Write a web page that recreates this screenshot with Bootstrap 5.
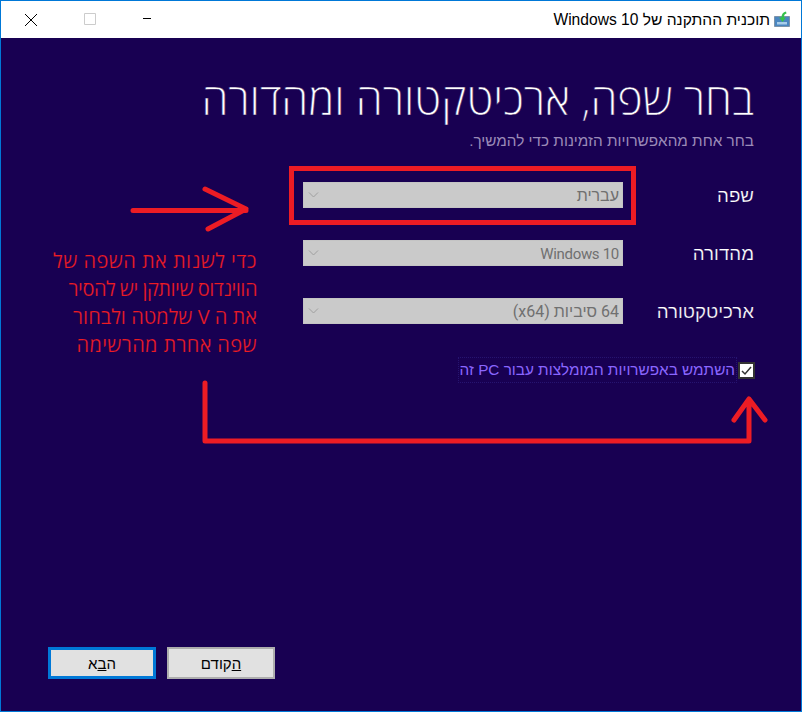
<!DOCTYPE html>
<html lang="he" dir="rtl">
<head>
<meta charset="utf-8">
<title>תוכנית ההתקנה של Windows 10</title>
<link href="https://cdn.jsdelivr.net/npm/bootstrap@5.3.0/dist/css/bootstrap.min.css" rel="stylesheet">
<style>
html,body{height:100%;margin:0}
body{font-family:"Open Sans","Liberation Sans",sans-serif;background:#180052}
.setup-win{width:802px;height:712px;border:1px solid #0078d7;position:relative;background:#180052;overflow:hidden}
.setup-title{height:37px;background:#fff;color:#000;padding:0 11px 0 1px;flex:none}
.ttext{font-family:"Liberation Sans",sans-serif;font-size:15.6px;margin-right:4px}
.ctrl{width:58px;text-align:center;line-height:0}
.ctrl-mid svg{margin-left:2px}
.setup-body{padding:0 47px;flex:1}
.setup-h{font-weight:300;font-size:43.4px;line-height:56px;color:#fff;margin:33px 0 0;font-family:"Open Sans","Liberation Sans",sans-serif;-webkit-text-stroke:.5px #180052}
.setup-sub{font-size:15.3px;line-height:20px;color:#9b8bb8;margin:4px 0 0;font-family:"Liberation Sans",sans-serif}
.frow{height:26px;margin-bottom:32px}
.flabel{width:131px;font-size:18.7px;color:#fff;font-family:"Liberation Sans",sans-serif;margin-top:2px;-webkit-text-stroke:.2px #180052}
.fsel.form-select{width:320px;height:26px;padding:1px 3px 0 0;border:1px solid #c4c4c4;border-radius:0;background-color:#cacaca;color:#707070;font-size:16px;line-height:24px;font-family:Roboto,"Liberation Sans",sans-serif;opacity:1;background-position:left 2px center;background-size:14px 8px;background-image:url("data:image/svg+xml,%3Csvg xmlns='http://www.w3.org/2000/svg' viewBox='0 0 14 8'%3E%3Cpath d='M3 1.5l4.500 4.500 4.500-4.500' fill='none' stroke='%23a0a0a0'/%3E%3C/svg%3E")}
.fsel.fsel-latin{font-size:15px;letter-spacing:-.3px}
.frows{margin-top:31px}
.chkrow{margin-top:36px;margin-right:-1px;height:20px;color:#8a66ff;font-size:15.3px;font-family:"Liberation Sans",sans-serif;gap:3px}
.chkbox{width:17px;height:17px;background:#fff;border:2px solid #333;flex:none;line-height:0}
.chktext{outline:1px dotted #261470;outline-offset:1px}
.btns{position:absolute;left:47px;bottom:32px;gap:11px}
.wbtn{width:108px;height:32px;background:#e1e1e1;color:#000;border:2px solid #adadad;border-radius:0;font-size:15px;line-height:1;padding:0;font-family:"Liberation Sans",sans-serif}
.wbtn.wdef{border:3px solid #0078d7}
.wbtn:hover{background:#e1e1e1;color:#000}
.anno{position:absolute;left:0;top:0;pointer-events:none}
.anno-text{position:absolute;right:544px;top:246px;width:240px;color:#ed1c24;font-size:20px;line-height:28px;font-family:"Open Sans","Liberation Sans",sans-serif;white-space:nowrap;-webkit-text-stroke:.2px #180052}
.al{display:block}
.al1{letter-spacing:.45px}
.al2{letter-spacing:-.5px}
.al4{letter-spacing:.35px}
</style>
</head>
<body>
<div class="setup-win d-flex flex-column">
  <div class="setup-title d-flex align-items-center justify-content-between">
    <div class="d-flex align-items-center">
      <svg width="16" height="16" viewBox="0 0 16 16"><path d="M.5 5.500h15v10H.5z" fill="#4a86c0" stroke="#7d93a8"/><path d="M3 11h10v2.500H3z" fill="#a8cdea"/><path d="M12 .5C9 1 7.500 3 7.500 6.500H5L8.500 11 12 6.500H10C10 4 10.500 3 12.500 2.500z" fill="#35c24a"/></svg>
      <span class="ttext">תוכנית ההתקנה של Windows 10</span>
    </div>
    <div class="d-flex flex-row-reverse">
      <div class="ctrl"><svg width="14" height="14" viewBox="0 0 14 14"><path d="M1 1l12 12M13 1L1 13" stroke="#000" stroke-width="1" fill="none"/></svg></div>
      <div class="ctrl ctrl-mid"><svg width="12" height="12" viewBox="0 0 12 12"><path d="M.5.5h11v11H.5z" fill="none" stroke="#ccc"/></svg></div>
      <div class="ctrl"><svg width="10" height="10" viewBox="0 0 10 10"><path d="M1 5.500h8" stroke="#000" stroke-width="1"/></svg></div>
    </div>
  </div>
  <div class="setup-body">
    <h1 class="setup-h">בחר שפה, ארכיטקטורה ומהדורה</h1>
    <p class="setup-sub">בחר אחת מהאפשרויות הזמינות כדי להמשיך.</p>
    <div class="frows">
      <div class="frow d-flex align-items-center"><label class="flabel">שפה</label><select class="form-select fsel" disabled><option>עברית</option></select></div>
      <div class="frow d-flex align-items-center"><label class="flabel">מהדורה</label><select class="form-select fsel fsel-latin" disabled><option>Windows 10</option></select></div>
      <div class="frow d-flex align-items-center"><label class="flabel">ארכיטקטורה</label><select class="form-select fsel" disabled><option>64 סיביות (x64)</option></select></div>
    </div>
    <div class="chkrow d-flex align-items-center">
      <span class="chkbox d-inline-block"><svg width="13" height="13" viewBox="0 0 13 13"><path d="M2 7l3 3 6-7" fill="none" stroke="#333" stroke-width="1.5"/></svg></span>
      <span class="chktext">השתמש באפשרויות המומלצות עבור PC זה</span>
    </div>
  </div>
  <div class="btns d-flex">
    <button class="btn wbtn" type="button"><u>ה</u>קודם</button>
    <button class="btn wbtn wdef" type="button">ה<u>ב</u>א</button>
  </div>
  <svg class="anno" width="802" height="712" viewBox="0 0 802 712">
    <g transform="translate(-1 -1)" fill="none" stroke="#ed1c24" stroke-linecap="round" stroke-linejoin="round">
      <rect x="291.500" y="168.500" width="342" height="54" stroke-width="5" stroke-linecap="butt" stroke-linejoin="miter"/>
      <path d="M133 210.500H246M205 189l41 20-38 20" stroke-width="5"/>
      <path d="M205 383V441H749V399M734 420l15-21 16 21" stroke-width="5"/>
    </g>
  </svg>
  <div class="anno-text"><span class="al al1">כדי לשנות את השפה של</span><span class="al al2">הווינדוס שיותקן יש להסיר</span><span class="al">את ה V שלמטה ולבחור</span><span class="al al4">שפה אחרת מהרשימה</span></div>
</div>
</body>
</html>
